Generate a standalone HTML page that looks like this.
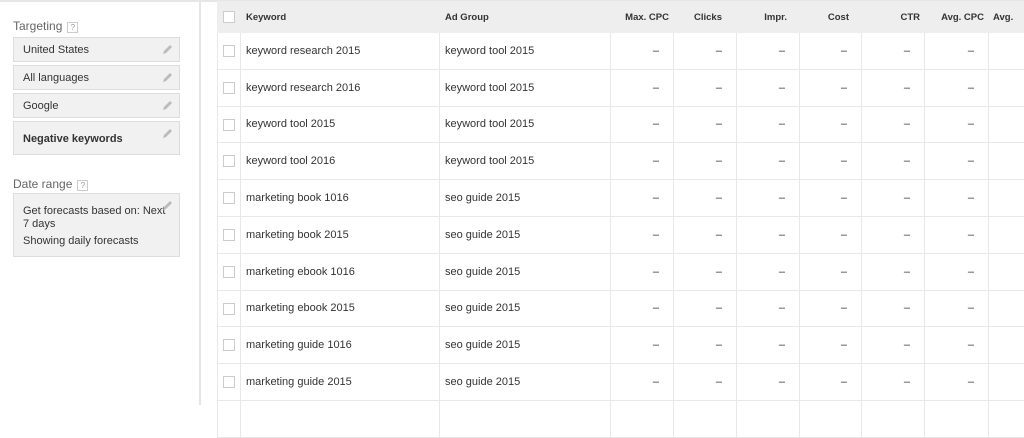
<!DOCTYPE html><html><head><style>
*{margin:0;padding:0;box-sizing:border-box}
body{width:1024px;height:405px;overflow:hidden;background:#fff;font-family:"Liberation Sans",Arial,sans-serif;color:#222;position:relative}
.topline{position:absolute;left:0;top:0;width:1024px;height:2px;background:#e6e6e6}
.vsep{position:absolute;left:199px;top:0;width:2px;height:405px;background:#e5e5e5}
.lbl{position:absolute;left:13px;font-size:12px;color:#666}
.q{display:inline-block;width:11px;height:11px;border:1px solid #ccc;font-size:8px;color:#999;text-align:center;line-height:9px;margin-left:5px;vertical-align:0}
.box{position:absolute;left:13px;width:167px;background:#f1f1f1;border:1px solid #ddd;font-size:11px;color:#333;padding:6px 9px}
.pen{position:absolute;right:6px;top:6px;width:11px;height:11px}
table{position:absolute;left:217px;top:1px;width:831px;border-collapse:collapse;font-size:11px;table-layout:fixed}
td,th{border:1px solid #e8e8e8;height:36.8px;white-space:nowrap;overflow:hidden}
th{background:#eee;height:31px;font-size:9.5px;font-weight:bold;color:#333;text-align:right;padding-right:4px;border-color:#eee}
th.l,td.l{text-align:left;padding-left:5px;padding-right:0}
td{text-align:right;padding-right:14px;color:#333}
.cb{display:inline-block;width:12px;height:12px;border:1px solid #ccc;background:#fff;vertical-align:middle}
td.c,th.c{text-align:center;padding:0}
</style></head><body>
<div class="topline"></div><div class="vsep"></div>
<div class="lbl" style="top:19px">Targeting<span class="q">?</span></div>
<div class="box" style="top:37px;height:25px">United States<svg class="pen" viewBox="0 0 11 11"><path d="M1 10l1-3 6-6 2 2-6 6z" fill="#bbb"/></svg></div>
<div class="box" style="top:65px;height:25px">All languages<svg class="pen" viewBox="0 0 11 11"><path d="M1 10l1-3 6-6 2 2-6 6z" fill="#bbb"/></svg></div>
<div class="box" style="top:93px;height:25px">Google<svg class="pen" viewBox="0 0 11 11"><path d="M1 10l1-3 6-6 2 2-6 6z" fill="#bbb"/></svg></div>
<div class="box" style="top:121px;height:34px;font-weight:bold;padding-top:11px">Negative keywords<svg class="pen" viewBox="0 0 11 11"><path d="M1 10l1-3 6-6 2 2-6 6z" fill="#bbb"/></svg></div>
<div class="lbl" style="top:177px">Date range<span class="q">?</span></div>
<div class="box" style="top:193px;height:64px;padding-top:11px;line-height:13px">Get forecasts based on: Next<br>7 days<div style="margin-top:4px">Showing daily forecasts</div><svg class="pen" viewBox="0 0 11 11"><path d="M1 10l1-3 6-6 2 2-6 6z" fill="#bbb"/></svg></div>
<table>
<colgroup><col style="width:23px"><col style="width:199px"><col style="width:171px"><col style="width:63px"><col style="width:63px"><col style="width:63px"><col style="width:62px"><col style="width:63px"><col style="width:64px"><col style="width:60px"></colgroup>
<tr><th class="c"><span class="cb"></span></th><th class="l">Keyword</th><th class="l">Ad Group</th><th>Max. CPC</th><th style="padding-right:14px">Clicks</th><th style="padding-right:12px">Impr.</th><th style="padding-right:12px">Cost</th><th>CTR</th><th>Avg. CPC</th><th class="l" style="padding-left:4px">Avg.</th></tr>
<tr><td class="c"><span class="cb"></span></td><td class="l">keyword research 2015</td><td class="l">keyword tool 2015</td><td>–</td><td>–</td><td>–</td><td>–</td><td>–</td><td>–</td><td></td></tr>
<tr><td class="c"><span class="cb"></span></td><td class="l">keyword research 2016</td><td class="l">keyword tool 2015</td><td>–</td><td>–</td><td>–</td><td>–</td><td>–</td><td>–</td><td></td></tr>
<tr><td class="c"><span class="cb"></span></td><td class="l">keyword tool 2015</td><td class="l">keyword tool 2015</td><td>–</td><td>–</td><td>–</td><td>–</td><td>–</td><td>–</td><td></td></tr>
<tr><td class="c"><span class="cb"></span></td><td class="l">keyword tool 2016</td><td class="l">keyword tool 2015</td><td>–</td><td>–</td><td>–</td><td>–</td><td>–</td><td>–</td><td></td></tr>
<tr><td class="c"><span class="cb"></span></td><td class="l">marketing book 1016</td><td class="l">seo guide 2015</td><td>–</td><td>–</td><td>–</td><td>–</td><td>–</td><td>–</td><td></td></tr>
<tr><td class="c"><span class="cb"></span></td><td class="l">marketing book 2015</td><td class="l">seo guide 2015</td><td>–</td><td>–</td><td>–</td><td>–</td><td>–</td><td>–</td><td></td></tr>
<tr><td class="c"><span class="cb"></span></td><td class="l">marketing ebook 1016</td><td class="l">seo guide 2015</td><td>–</td><td>–</td><td>–</td><td>–</td><td>–</td><td>–</td><td></td></tr>
<tr><td class="c"><span class="cb"></span></td><td class="l">marketing ebook 2015</td><td class="l">seo guide 2015</td><td>–</td><td>–</td><td>–</td><td>–</td><td>–</td><td>–</td><td></td></tr>
<tr><td class="c"><span class="cb"></span></td><td class="l">marketing guide 1016</td><td class="l">seo guide 2015</td><td>–</td><td>–</td><td>–</td><td>–</td><td>–</td><td>–</td><td></td></tr>
<tr><td class="c"><span class="cb"></span></td><td class="l">marketing guide 2015</td><td class="l">seo guide 2015</td><td>–</td><td>–</td><td>–</td><td>–</td><td>–</td><td>–</td><td></td></tr>
<tr><td class="c"></td><td class="l"></td><td class="l"></td><td></td><td></td><td></td><td></td><td></td><td></td><td></td></tr>
</table>
</body></html>
